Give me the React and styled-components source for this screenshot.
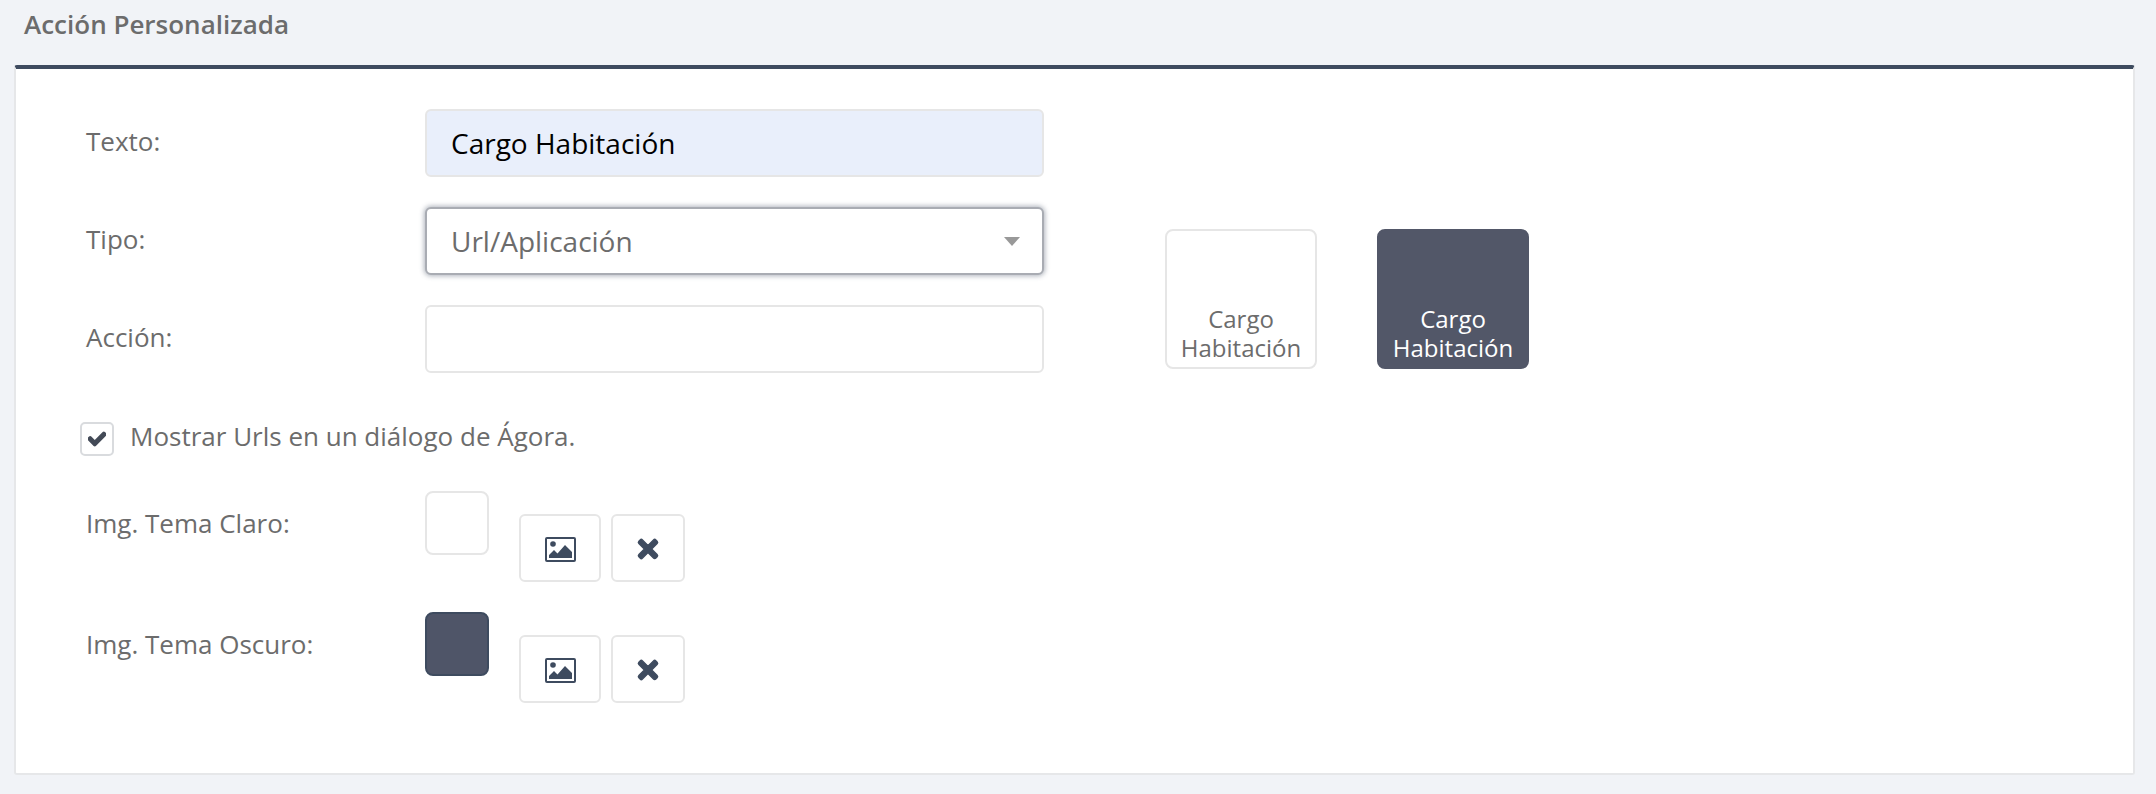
import React from 'react';
import styled, { createGlobalStyle } from 'styled-components';
import { FaCheck, FaTimes } from 'react-icons/fa';

const GlobalStyle = createGlobalStyle`
  body {
    margin: 0;
    background-color: #f1f3f7;
    font-family: "Open Sans", "Liberation Sans", sans-serif;
    font-size: 26px;
    color: #6c6c6c;
  }
`;

const Page = styled.div`
  padding: 0 21px 19px 14px;
`;

const Title = styled.h2`
  height: 65px;
  margin: 0;
  padding: 6px 0 0 10px;
  box-sizing: border-box;
  font-size: 26px;
  line-height: 36px;
  font-weight: 600;
`;

const Panel = styled.section`
  height: 710px;
  box-sizing: border-box;
  padding: 40px 0 0 70px;
  background-color: #ffffff;
  border: 2px solid #e6e7e9;
  border-top: 4px solid #3e4b5f;
  border-radius: 3px;
`;

const TopSection = styled.div`
  display: flex;
`;

const Fields = styled.div`
  display: flex;
  flex-direction: column;
  gap: 30px;
`;

const FieldRow = styled.div`
  display: grid;
  grid-template-columns: 339px 619px;
`;

const Label = styled.label`
  line-height: 36px;
  padding-top: 14px;
`;

const TextInput = styled.input`
  width: 100%;
  height: 68px;
  box-sizing: border-box;
  padding: 0 24px;
  font: inherit;
  font-size: 28px;
  color: ${props => (props.$filled ? '#000000' : '#6c6c6c')};
  background-color: ${props => (props.$filled ? '#e9effb' : '#ffffff')};
  border: 2px solid #e6e6e6;
  border-radius: 6px;
  outline: none;
`;

const SelectWrapper = styled.div`
  position: relative;

  &::after {
    content: '';
    position: absolute;
    top: 30px;
    right: 24px;
    border-style: solid;
    border-width: 9px 8px 0 8px;
    border-color: #999999 transparent transparent transparent;
  }
`;

const Select = styled.select`
  display: block;
  width: 100%;
  height: 68px;
  box-sizing: border-box;
  padding: 0 24px;
  font: inherit;
  font-size: 28px;
  color: #6c6c6c;
  background-color: #ffffff;
  border: 2px solid #a9acb3;
  border-radius: 6px;
  box-shadow: 0 0 5px 1px rgba(62, 75, 95, 0.42);
  outline: none;
  appearance: none;
`;

const Previews = styled.div`
  display: flex;
  gap: 60px;
  margin: 120px 0 0 121px;
`;

const Tile = styled.div`
  display: flex;
  align-items: flex-end;
  justify-content: center;
  width: 152px;
  height: 140px;
  box-sizing: border-box;
  padding-bottom: 5px;
  font-size: 24px;
  line-height: 29px;
  text-align: center;
  color: ${props => (props.$dark ? '#ffffff' : '#6c6c6c')};
  background-color: ${props => (props.$dark ? '#525768' : '#ffffff')};
  border: 2px solid ${props => (props.$dark ? '#525768' : '#e6e6e6')};
  border-radius: 8px;
`;

const CheckRow = styled.div`
  display: flex;
  align-items: center;
  gap: 16px;
  height: 34px;
  margin: 49px 0 0 -6px;
`;

const CheckBox = styled.span`
  display: flex;
  align-items: center;
  justify-content: center;
  width: 34px;
  height: 34px;
  box-sizing: border-box;
  color: #434a57;
  font-size: 18px;
  border: 2px solid #d9dbde;
  border-radius: 5px;
`;

const CheckText = styled.span`
  line-height: 36px;
  padding-bottom: 6px;
`;

const ImageRows = styled.div`
  display: flex;
  flex-direction: column;
  gap: 30px;
  margin-top: 35px;
`;

const ImageRow = styled.div`
  display: grid;
  grid-template-columns: 339px 64px auto;
  justify-content: start;
`;

const ImageLabel = styled.label`
  line-height: 36px;
  padding-top: 14px;
`;

const Thumb = styled.div`
  width: 64px;
  height: 64px;
  box-sizing: border-box;
  background-color: ${props => (props.$dark ? '#4f5568' : '#ffffff')};
  border: 2px solid ${props => (props.$dark ? '#3e4b5f' : '#e6e6e6')};
  border-radius: 8px;
`;

const ImageButtons = styled.div`
  display: flex;
  gap: 10px;
  margin: 23px 0 0 30px;
`;

const IconButton = styled.button`
  display: flex;
  align-items: center;
  justify-content: center;
  width: ${props => props.$width}px;
  height: 68px;
  padding: 2px 0 0;
  color: #3e4b5f;
  background-color: #ffffff;
  border: 2px solid #e6e6e6;
  border-radius: 6px;
`;

const ImageIcon = () => (
  <svg width="31" height="25" viewBox="0 0 31 25" fill="none">
    <rect x="1" y="1" width="29" height="23" rx="1" stroke="currentColor" strokeWidth="2" />
    <circle cx="8" cy="7" r="2.8" fill="currentColor" />
    <path d="M4 21v-3l5-5 3.5 3.5L20 8l7 7v6z" fill="currentColor" />
  </svg>
);

const ImageActions = () => (
  <ImageButtons>
    <IconButton $width={82}><ImageIcon /></IconButton>
    <IconButton $width={74}><FaTimes size={28} stroke="currentColor" strokeWidth={24} /></IconButton>
  </ImageButtons>
);

const App = () => (
  <Page>
    <GlobalStyle />
    <Title>Acción Personalizada</Title>
    <Panel>
      <TopSection>
        <Fields>
          <FieldRow>
            <Label>Texto:</Label>
            <TextInput $filled readOnly value="Cargo Habitación" />
          </FieldRow>
          <FieldRow>
            <Label>Tipo:</Label>
            <SelectWrapper>
              <Select defaultValue="url">
                <option value="url">Url/Aplicación</option>
              </Select>
            </SelectWrapper>
          </FieldRow>
          <FieldRow>
            <Label>Acción:</Label>
            <TextInput readOnly value="" />
          </FieldRow>
        </Fields>
        <Previews>
          <Tile>Cargo Habitación</Tile>
          <Tile $dark>Cargo Habitación</Tile>
        </Previews>
      </TopSection>
      <CheckRow>
        <CheckBox><FaCheck stroke="currentColor" strokeWidth={40} /></CheckBox>
        <CheckText>Mostrar Urls en un diálogo de Ágora.</CheckText>
      </CheckRow>
      <ImageRows>
        <ImageRow>
          <ImageLabel>Img. Tema Claro:</ImageLabel>
          <Thumb />
          <ImageActions />
        </ImageRow>
        <ImageRow>
          <ImageLabel>Img. Tema Oscuro:</ImageLabel>
          <Thumb $dark />
          <ImageActions />
        </ImageRow>
      </ImageRows>
    </Panel>
  </Page>
);

export default App;
